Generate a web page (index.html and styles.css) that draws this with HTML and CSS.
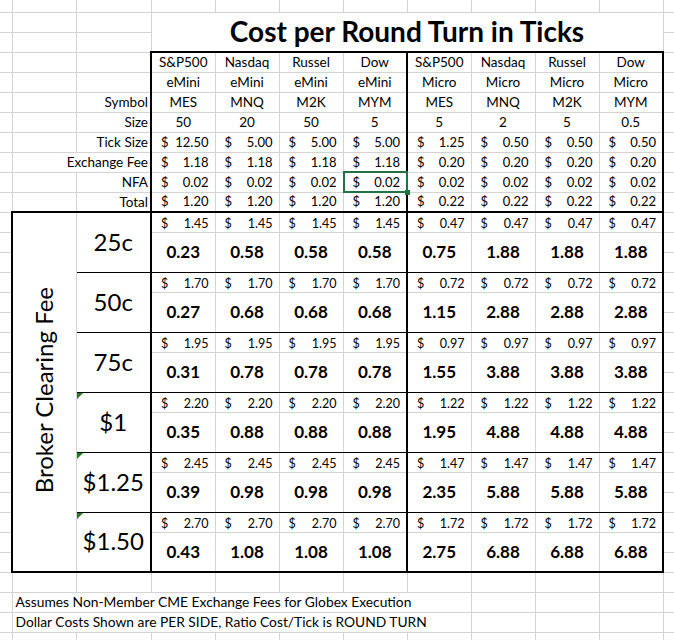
FILE: index.html
```html
<!DOCTYPE html>
<html>
<head>
<meta charset="utf-8">
<title>Cost per Round Turn in Ticks</title>
<link rel="stylesheet" href="styles.css">
</head>
<body>
<table class="sheet">
<colgroup>
<col class="w12"><col class="w64"><col class="w75">
<col class="w64"><col class="w64"><col class="w64"><col class="w64">
<col class="w64"><col class="w64"><col class="w64"><col class="w64">
<col class="w11">
</colgroup>
<tr class="h12"><td class="a"></td><td></td><td></td><td></td><td></td><td></td><td></td><td></td><td></td><td></td><td></td><td class="z"></td></tr>
<tr><td class="a"></td><td></td><td></td><td class="title" colspan="8" rowspan="2">Cost per Round Turn in Ticks</td><td class="z"></td></tr>
<tr><td class="a"></td><td></td><td></td><td class="z"></td></tr>

<tr><td class="a"></td><td></td><td></td>
<td class="c l2 t2">S&amp;P500</td><td class="c t2">Nasdaq</td><td class="c t2">Russel</td><td class="c t2">Dow</td>
<td class="c l2 t2">S&amp;P500</td><td class="c t2">Nasdaq</td><td class="c t2">Russel</td><td class="c r2 t2">Dow</td>
<td class="z"></td></tr>
<tr><td class="a"></td><td></td><td></td>
<td class="c l2">eMini</td><td class="c">eMini</td><td class="c">eMini</td><td class="c">eMini</td>
<td class="c l2">Micro</td><td class="c">Micro</td><td class="c">Micro</td><td class="c r2">Micro</td>
<td class="z"></td></tr>
<tr><td class="a"></td><td></td><td class="lbl">Symbol</td>
<td class="c l2">MES</td><td class="c">MNQ</td><td class="c">M2K</td><td class="c">MYM</td>
<td class="c l2">MES</td><td class="c">MNQ</td><td class="c">M2K</td><td class="c r2">MYM</td>
<td class="z"></td></tr>
<tr><td class="a"></td><td></td><td class="lbl">Size</td>
<td class="c l2">50</td><td class="c">20</td><td class="c">50</td><td class="c">5</td>
<td class="c l2">5</td><td class="c">2</td><td class="c">5</td><td class="c r2">0.5</td>
<td class="z"></td></tr>
<tr><td class="a"></td><td></td><td class="lbl">Tick Size</td>
<td class="m l2"><div class="acc"><span>$</span><span>12.50</span></div></td>
<td class="m"><div class="acc"><span>$</span><span>5.00</span></div></td>
<td class="m"><div class="acc"><span>$</span><span>5.00</span></div></td>
<td class="m"><div class="acc"><span>$</span><span>5.00</span></div></td>
<td class="m l2"><div class="acc"><span>$</span><span>1.25</span></div></td>
<td class="m"><div class="acc"><span>$</span><span>0.50</span></div></td>
<td class="m"><div class="acc"><span>$</span><span>0.50</span></div></td>
<td class="m r2"><div class="acc"><span>$</span><span>0.50</span></div></td>
<td class="z"></td></tr>
<tr><td class="a"></td><td class="lbl" colspan="2">Exchange Fee</td>
<td class="m l2"><div class="acc"><span>$</span><span>1.18</span></div></td>
<td class="m"><div class="acc"><span>$</span><span>1.18</span></div></td>
<td class="m"><div class="acc"><span>$</span><span>1.18</span></div></td>
<td class="m"><div class="acc"><span>$</span><span>1.18</span></div></td>
<td class="m l2"><div class="acc"><span>$</span><span>0.20</span></div></td>
<td class="m"><div class="acc"><span>$</span><span>0.20</span></div></td>
<td class="m"><div class="acc"><span>$</span><span>0.20</span></div></td>
<td class="m r2"><div class="acc"><span>$</span><span>0.20</span></div></td>
<td class="z"></td></tr>
<tr><td class="a"></td><td></td><td class="lbl">NFA</td>
<td class="m l2"><div class="acc"><span>$</span><span>0.02</span></div></td>
<td class="m"><div class="acc"><span>$</span><span>0.02</span></div></td>
<td class="m"><div class="acc"><span>$</span><span>0.02</span></div></td>
<td class="m sel"><div class="acc"><span>$</span><span>0.02</span></div></td>
<td class="m l2"><div class="acc"><span>$</span><span>0.02</span></div></td>
<td class="m"><div class="acc"><span>$</span><span>0.02</span></div></td>
<td class="m"><div class="acc"><span>$</span><span>0.02</span></div></td>
<td class="m r2"><div class="acc"><span>$</span><span>0.02</span></div></td>
<td class="z"></td></tr>
<tr><td class="a"></td><td></td><td class="lbl">Total</td>
<td class="m l2"><div class="acc"><span>$</span><span>1.20</span></div></td>
<td class="m"><div class="acc"><span>$</span><span>1.20</span></div></td>
<td class="m"><div class="acc"><span>$</span><span>1.20</span></div></td>
<td class="m"><div class="acc"><span>$</span><span>1.20</span></div></td>
<td class="m l2"><div class="acc"><span>$</span><span>0.22</span></div></td>
<td class="m"><div class="acc"><span>$</span><span>0.22</span></div></td>
<td class="m"><div class="acc"><span>$</span><span>0.22</span></div></td>
<td class="m r2"><div class="acc"><span>$</span><span>0.22</span></div></td>
<td class="z"></td></tr>

<!-- 25c -->
<tr><td class="a"></td>
<td class="broker l2 t2 b2" rowspan="18"><span>Broker Clearing Fee</span></td>
<td class="fee t2 b1" rowspan="3">25c</td>
<td class="s l2 t2"><div class="acc"><span>$</span><span>1.45</span></div></td>
<td class="s t2"><div class="acc"><span>$</span><span>1.45</span></div></td>
<td class="s t2"><div class="acc"><span>$</span><span>1.45</span></div></td>
<td class="s t2"><div class="acc"><span>$</span><span>1.45</span></div></td>
<td class="s l2 t2"><div class="acc"><span>$</span><span>0.47</span></div></td>
<td class="s t2"><div class="acc"><span>$</span><span>0.47</span></div></td>
<td class="s t2"><div class="acc"><span>$</span><span>0.47</span></div></td>
<td class="s r2 t2"><div class="acc"><span>$</span><span>0.47</span></div></td>
<td class="z"></td></tr>
<tr><td class="a"></td>
<td class="big l2 b1" rowspan="2">0.23</td><td class="big b1" rowspan="2">0.58</td><td class="big b1" rowspan="2">0.58</td><td class="big b1" rowspan="2">0.58</td>
<td class="big l2 b1" rowspan="2">0.75</td><td class="big b1" rowspan="2">1.88</td><td class="big b1" rowspan="2">1.88</td><td class="big r2 b1" rowspan="2">1.88</td>
<td class="z"></td></tr>
<tr><td class="a"></td><td class="z"></td></tr>

<!-- 50c -->
<tr><td class="a"></td>
<td class="fee t1 b1" rowspan="3">50c</td>
<td class="s l2 t1"><div class="acc"><span>$</span><span>1.70</span></div></td>
<td class="s t1"><div class="acc"><span>$</span><span>1.70</span></div></td>
<td class="s t1"><div class="acc"><span>$</span><span>1.70</span></div></td>
<td class="s t1"><div class="acc"><span>$</span><span>1.70</span></div></td>
<td class="s l2 t1"><div class="acc"><span>$</span><span>0.72</span></div></td>
<td class="s t1"><div class="acc"><span>$</span><span>0.72</span></div></td>
<td class="s t1"><div class="acc"><span>$</span><span>0.72</span></div></td>
<td class="s r2 t1"><div class="acc"><span>$</span><span>0.72</span></div></td>
<td class="z"></td></tr>
<tr><td class="a"></td>
<td class="big l2 b1" rowspan="2">0.27</td><td class="big b1" rowspan="2">0.68</td><td class="big b1" rowspan="2">0.68</td><td class="big b1" rowspan="2">0.68</td>
<td class="big l2 b1" rowspan="2">1.15</td><td class="big b1" rowspan="2">2.88</td><td class="big b1" rowspan="2">2.88</td><td class="big r2 b1" rowspan="2">2.88</td>
<td class="z"></td></tr>
<tr><td class="a"></td><td class="z"></td></tr>

<!-- 75c -->
<tr><td class="a"></td>
<td class="fee t1 b1" rowspan="3">75c</td>
<td class="s l2 t1"><div class="acc"><span>$</span><span>1.95</span></div></td>
<td class="s t1"><div class="acc"><span>$</span><span>1.95</span></div></td>
<td class="s t1"><div class="acc"><span>$</span><span>1.95</span></div></td>
<td class="s t1"><div class="acc"><span>$</span><span>1.95</span></div></td>
<td class="s l2 t1"><div class="acc"><span>$</span><span>0.97</span></div></td>
<td class="s t1"><div class="acc"><span>$</span><span>0.97</span></div></td>
<td class="s t1"><div class="acc"><span>$</span><span>0.97</span></div></td>
<td class="s r2 t1"><div class="acc"><span>$</span><span>0.97</span></div></td>
<td class="z"></td></tr>
<tr><td class="a"></td>
<td class="big l2 b1" rowspan="2">0.31</td><td class="big b1" rowspan="2">0.78</td><td class="big b1" rowspan="2">0.78</td><td class="big b1" rowspan="2">0.78</td>
<td class="big l2 b1" rowspan="2">1.55</td><td class="big b1" rowspan="2">3.88</td><td class="big b1" rowspan="2">3.88</td><td class="big r2 b1" rowspan="2">3.88</td>
<td class="z"></td></tr>
<tr><td class="a"></td><td class="z"></td></tr>

<!-- $1 -->
<tr><td class="a"></td>
<td class="fee tri t1 b1" rowspan="3">$1</td>
<td class="s l2 t1"><div class="acc"><span>$</span><span>2.20</span></div></td>
<td class="s t1"><div class="acc"><span>$</span><span>2.20</span></div></td>
<td class="s t1"><div class="acc"><span>$</span><span>2.20</span></div></td>
<td class="s t1"><div class="acc"><span>$</span><span>2.20</span></div></td>
<td class="s l2 t1"><div class="acc"><span>$</span><span>1.22</span></div></td>
<td class="s t1"><div class="acc"><span>$</span><span>1.22</span></div></td>
<td class="s t1"><div class="acc"><span>$</span><span>1.22</span></div></td>
<td class="s r2 t1"><div class="acc"><span>$</span><span>1.22</span></div></td>
<td class="z"></td></tr>
<tr><td class="a"></td>
<td class="big l2 b1" rowspan="2">0.35</td><td class="big b1" rowspan="2">0.88</td><td class="big b1" rowspan="2">0.88</td><td class="big b1" rowspan="2">0.88</td>
<td class="big l2 b1" rowspan="2">1.95</td><td class="big b1" rowspan="2">4.88</td><td class="big b1" rowspan="2">4.88</td><td class="big r2 b1" rowspan="2">4.88</td>
<td class="z"></td></tr>
<tr><td class="a"></td><td class="z"></td></tr>

<!-- $1.25 -->
<tr><td class="a"></td>
<td class="fee tri t1 b1" rowspan="3">$1.25</td>
<td class="s l2 t1"><div class="acc"><span>$</span><span>2.45</span></div></td>
<td class="s t1"><div class="acc"><span>$</span><span>2.45</span></div></td>
<td class="s t1"><div class="acc"><span>$</span><span>2.45</span></div></td>
<td class="s t1"><div class="acc"><span>$</span><span>2.45</span></div></td>
<td class="s l2 t1"><div class="acc"><span>$</span><span>1.47</span></div></td>
<td class="s t1"><div class="acc"><span>$</span><span>1.47</span></div></td>
<td class="s t1"><div class="acc"><span>$</span><span>1.47</span></div></td>
<td class="s r2 t1"><div class="acc"><span>$</span><span>1.47</span></div></td>
<td class="z"></td></tr>
<tr><td class="a"></td>
<td class="big l2 b1" rowspan="2">0.39</td><td class="big b1" rowspan="2">0.98</td><td class="big b1" rowspan="2">0.98</td><td class="big b1" rowspan="2">0.98</td>
<td class="big l2 b1" rowspan="2">2.35</td><td class="big b1" rowspan="2">5.88</td><td class="big b1" rowspan="2">5.88</td><td class="big r2 b1" rowspan="2">5.88</td>
<td class="z"></td></tr>
<tr><td class="a"></td><td class="z"></td></tr>

<!-- $1.50 -->
<tr><td class="a"></td>
<td class="fee tri t1 b2" rowspan="3">$1.50</td>
<td class="s l2 t1"><div class="acc"><span>$</span><span>2.70</span></div></td>
<td class="s t1"><div class="acc"><span>$</span><span>2.70</span></div></td>
<td class="s t1"><div class="acc"><span>$</span><span>2.70</span></div></td>
<td class="s t1"><div class="acc"><span>$</span><span>2.70</span></div></td>
<td class="s l2 t1"><div class="acc"><span>$</span><span>1.72</span></div></td>
<td class="s t1"><div class="acc"><span>$</span><span>1.72</span></div></td>
<td class="s t1"><div class="acc"><span>$</span><span>1.72</span></div></td>
<td class="s r2 t1"><div class="acc"><span>$</span><span>1.72</span></div></td>
<td class="z"></td></tr>
<tr><td class="a"></td>
<td class="big l2 b2" rowspan="2">0.43</td><td class="big b2" rowspan="2">1.08</td><td class="big b2" rowspan="2">1.08</td><td class="big b2" rowspan="2">1.08</td>
<td class="big l2 b2" rowspan="2">2.75</td><td class="big b2" rowspan="2">6.88</td><td class="big b2" rowspan="2">6.88</td><td class="big r2 b2" rowspan="2">6.88</td>
<td class="z"></td></tr>
<tr><td class="a"></td><td class="z"></td></tr>

<tr><td class="a"></td><td></td><td></td><td></td><td></td><td></td><td></td><td></td><td></td><td></td><td></td><td class="z"></td></tr>
<tr><td class="a"></td><td class="note" colspan="7">Assumes Non-Member CME Exchange Fees for Globex Execution</td><td></td><td></td><td></td><td class="z"></td></tr>
<tr><td class="a"></td><td class="note" colspan="7">Dollar Costs Shown are PER SIDE, Ratio Cost/Tick is ROUND TURN</td><td></td><td></td><td></td><td class="z"></td></tr>
<tr class="h8"><td class="a"></td><td></td><td></td><td></td><td></td><td></td><td></td><td></td><td></td><td></td><td></td><td class="z"></td></tr>
</table>
</body>
</html>
```

FILE: styles.css
```css
html, body {
  margin: 0;
  padding: 0;
  background: #fff;
  overflow: hidden;
}

.sheet {
  border-collapse: collapse;
  table-layout: fixed;
  width: 674px;
  font-family: Lato, "Noto Sans", sans-serif;
  color: #000;
}

.w12 { width: 12px; }
.w64 { width: 64px; }
.w75 { width: 75px; }
.w11 { width: 11px; }

.sheet tr { height: 20px; }
.sheet tr.h12 { height: 12px; }
.sheet tr.h8 { height: 8px; }

.sheet td {
  border: 1px solid #d4d4d4;
  padding: 0 0 1px 0;
  font-size: 13.5px;
  line-height: 1.2;
  vertical-align: bottom;
  white-space: nowrap;
}

.sheet .a { border-left: none; }
.sheet .z { border-right: none; }
.sheet tr.h12 td { border-top: none; }
.sheet tr.h8 td { border-bottom: none; }

.sheet .t2 { border-top: 2px solid #000; }
.sheet .t1 { border-top: 1px solid #000; }
.sheet .b1 { border-bottom: 1px solid #000; }
.sheet .b2 { border-bottom: 2px solid #000; }
.sheet .l2 { border-left: 2px solid #000; }
.sheet .r2 { border-right: 2px solid #000; }

.sheet .title {
  font-size: 28px;
  font-weight: 700;
  text-align: center;
  vertical-align: middle;
  padding: 0;
}

.sheet .c { text-align: center; }

.sheet .lbl {
  text-align: right;
  padding-right: 2px;
}

.acc {
  display: flex;
  justify-content: space-between;
  padding: 0 6px 0 9px;
}

.sheet .m { font-size: 13px; }
.sheet .s { font-size: 12.5px; }

.sheet .big {
  font-size: 17px;
  font-weight: 700;
  text-align: center;
  vertical-align: middle;
  padding: 0;
}

.sheet .fee {
  font-size: 24px;
  text-align: center;
  vertical-align: middle;
  padding: 0;
}

.sheet .broker {
  text-align: center;
  vertical-align: middle;
  padding: 0;
}

.broker span {
  display: inline-block;
  writing-mode: vertical-rl;
  transform: rotate(180deg);
  font-size: 24px;
  line-height: 1.2;
}

.sheet .note {
  padding-left: 3px;
  font-size: 13.8px;
}

.tri { position: relative; }
.tri::before {
  content: "";
  position: absolute;
  top: 0;
  left: 0;
  border-top: 6px solid #1d7d1d;
  border-right: 6px solid transparent;
}

.sel { position: relative; }
.sel::before {
  content: "";
  position: absolute;
  left: -1px;
  top: -2px;
  right: -2px;
  bottom: -1px;
  border: 2px solid #217346;
}
.sel::after {
  content: "";
  position: absolute;
  right: -4px;
  bottom: -3px;
  width: 5px;
  height: 5px;
  background: #217346;
}
```
